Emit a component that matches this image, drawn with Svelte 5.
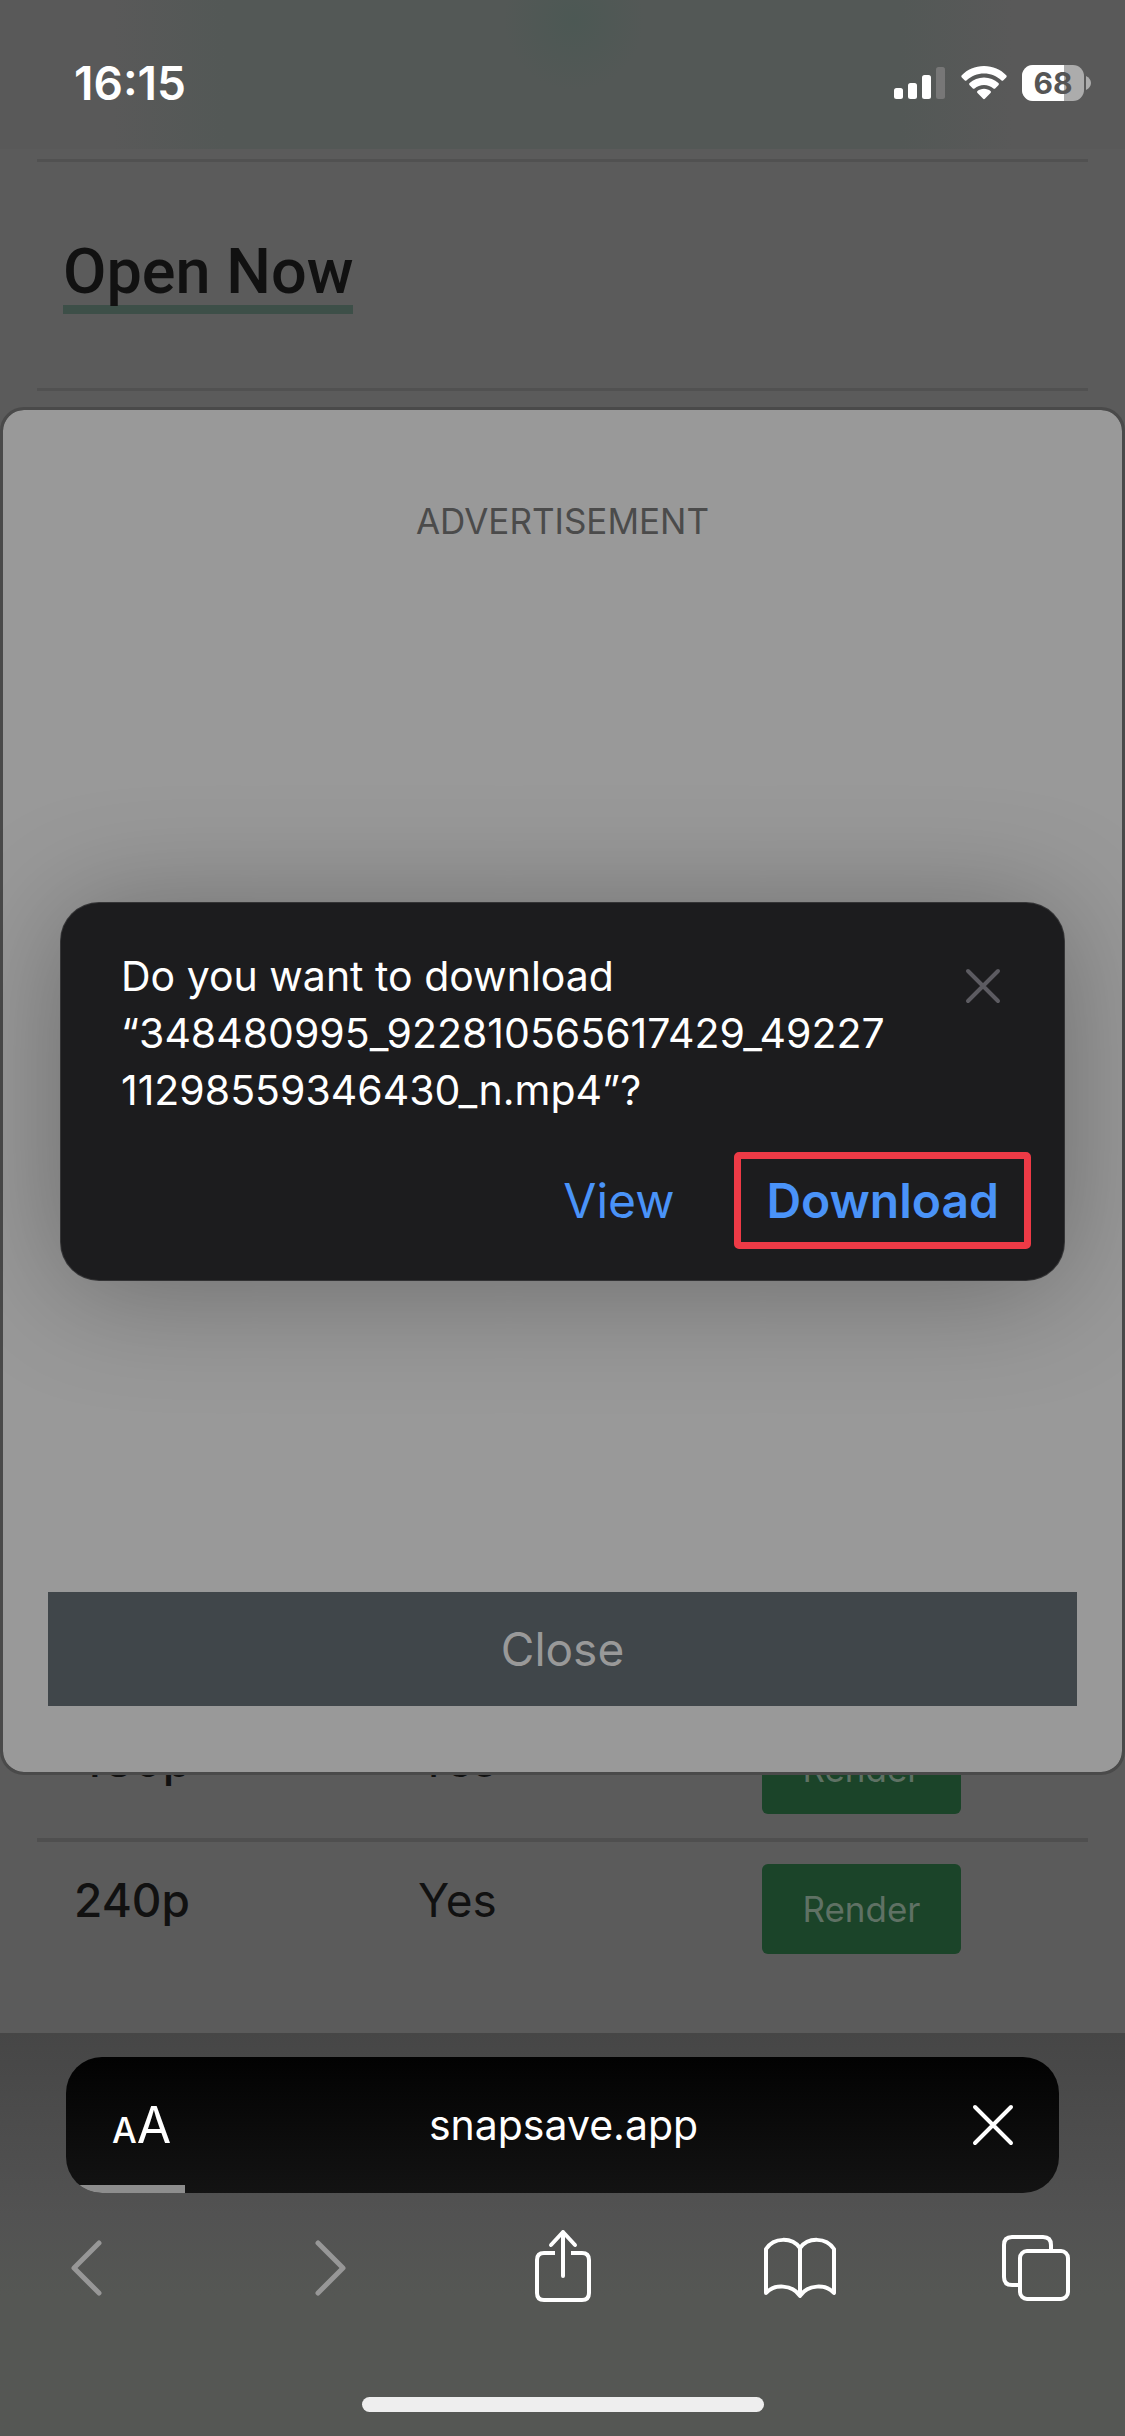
<script lang="ts">
  // Mobile browser screen: page content, ad modal and the download prompt on top.
  const fileName = '348480995_922810565617429_4922711298559346430_n.mp4';
  const rows = [
    { quality: '480p', render: 'Yes' },
    { quality: '240p', render: 'Yes' }
  ];
  const battery = 68;
  const progress = 12;
</script>

<div class="screen">
  <header class="status">
    <time>16:15</time>
    <div class="indicators">
      <svg width="52" height="34" viewBox="0 0 52 34" aria-hidden="true">
        <rect x="0" y="22" width="9" height="11" rx="2.5" fill="#fff" />
        <rect x="14" y="17" width="9" height="16" rx="2.5" fill="#fff" />
        <rect x="28" y="9" width="9" height="24" rx="2.5" fill="#fff" />
        <rect x="42" y="1" width="9" height="32" rx="2.5" fill="#777" />
      </svg>
      <svg width="46" height="34" viewBox="0 0 46 34" fill="#fff" aria-hidden="true">
        <path d="M23 0C14 0 6.500 3.500.8 9.200a1.600 1.600 0 0 0 0 2.200l2.800 2.800a1.500 1.500 0 0 0 2.100 0C10.300 9.800 16.300 7.400 23 7.400s12.700 2.400 17.300 6.800a1.500 1.500 0 0 0 2.100 0l2.800-2.800a1.600 1.600 0 0 0 0-2.200C39.500 3.500 32 0 23 0z" />
        <path d="M23 11.500c-5.600 0-10.600 2.100-14.400 5.600a1.500 1.500 0 0 0 0 2.200l3 3a1.500 1.500 0 0 0 2 .1c2.600-2.200 5.800-3.500 9.400-3.500s6.800 1.300 9.400 3.500a1.500 1.500 0 0 0 2-.1l3-3a1.500 1.500 0 0 0 0-2.200C33.600 13.600 28.600 11.500 23 11.500z" />
        <path d="M23 22.800c-2.600 0-4.800.9-6.500 2.300a1.300 1.300 0 0 0 0 2l5.400 5.500a1.500 1.500 0 0 0 2.200 0l5.400-5.500a1.300 1.300 0 0 0 0-2c-1.700-1.400-3.900-2.300-6.500-2.300z" />
      </svg>
      <div class="battery">
        <div class="cell">
          <div class="charge" style:width="{battery}%"></div>
          <span>{battery}</span>
        </div>
        <svg width="5" height="14" viewBox="0 0 5 14" aria-hidden="true"><path d="M0 0c3 1.500 5 4 5 7s-2 5.500-5 7z" fill="#acacac" /></svg>
      </div>
    </div>
  </header>

  <main>
    <h2><span>Open Now</span></h2>

    <table>
      <tbody>
        {#each rows as row}
          <tr>
            <th scope="row">{row.quality}</th>
            <td>{row.render}</td>
            <td><button class="render" type="button">Render</button></td>
          </tr>
        {/each}
      </tbody>
    </table>

    <div class="overlay">
      <section class="ad" aria-label="Advertisement">
        <p>ADVERTISEMENT</p>
        <button class="close" type="button">Close</button>
      </section>
    </div>

    <div class="overlay">
      <div class="prompt" role="dialog" aria-label="Download">
        <div class="message">
          <p>Do you want to download “{fileName}”?</p>
          <button type="button" aria-label="Dismiss">
            <svg width="36" height="36" viewBox="0 0 36 36" fill="none" stroke="#5c5b61" stroke-width="4" stroke-linecap="round">
              <path d="M3 3l30 30M33 3L3 33" />
            </svg>
          </button>
        </div>
        <div class="actions">
          <button type="button">View</button>
          <button class="primary" type="button">Download</button>
        </div>
      </div>
    </div>
  </main>

  <footer>
    <div class="address">
      <button class="reader" type="button" aria-label="Page settings"><small>A</small>A</button>
      <a href="#site">snapsave.app</a>
      <button class="stop" type="button" aria-label="Stop loading">
        <svg width="44" height="44" viewBox="0 0 44 44" fill="none" stroke="#fff" stroke-width="4" stroke-linecap="round">
          <path d="M4 4l36 36M40 4L4 40" />
        </svg>
      </button>
      <div class="progress" style:width="{progress}%"></div>
    </div>

    <nav aria-label="Browser">
      <button type="button" aria-label="Back">
        <svg width="76" height="76" viewBox="0 0 76 76" fill="none" stroke="#979797" stroke-width="5" stroke-linecap="round" stroke-linejoin="round">
          <path d="M49 15L24 40l25 25" />
        </svg>
      </button>
      <button type="button" aria-label="Forward">
        <svg width="76" height="76" viewBox="0 0 76 76" fill="none" stroke="#979797" stroke-width="5" stroke-linecap="round" stroke-linejoin="round">
          <path d="M31 15l25 25-25 25" />
        </svg>
      </button>
      <button type="button" aria-label="Share">
        <svg width="76" height="76" viewBox="0 0 76 76" fill="none" stroke="#fff" stroke-width="4" stroke-linecap="round" stroke-linejoin="round">
          <path d="M30 25H19q-7 0-7 7v33q0 7 7 7h38q7 0 7-7V32q0-7-7-7H46" stroke-linecap="butt" />
          <path d="M38 48V4M26 17L38 4l12 13" />
        </svg>
      </button>
      <button type="button" aria-label="Bookmarks">
        <svg width="76" height="76" viewBox="0 0 76 76" fill="none" stroke="#fff" stroke-width="4" stroke-linecap="round" stroke-linejoin="round">
          <path d="M38 20C30 9 12 9 4 21v44c8-9 26-9 34 3 8-12 26-12 34-3V21C64 9 46 9 38 20zV66" />
        </svg>
      </button>
      <button type="button" aria-label="Tabs">
        <svg width="76" height="76" viewBox="0 0 76 76" fill="none" stroke="#fff" stroke-width="4">
          <path d="M21 57h-8q-8 0-8-8V17q0-8 8-8h31q8 0 8 8v6" />
          <rect x="21" y="23" width="48" height="48" rx="7" />
        </svg>
      </button>
    </nav>

    <div class="home"></div>
  </footer>
</div>

<style>
  :global(body) { margin: 0; background: #5b5b5b; }
  .screen {
    min-height: 100vh;
    display: flex;
    flex-direction: column;
    font-family: Inter, "Liberation Sans", sans-serif;
    color: #111;
    background: #5b5b5b;
  }
  button { border: 0; margin: 0; padding: 0; background: none; color: inherit; font: inherit; cursor: pointer; }
  svg { display: block; }
  p, h2 { margin: 0; }

  .status {
    box-sizing: border-box;
    height: 149px;
    padding: 16px 34px 0 74px;
    display: flex;
    align-items: center;
    justify-content: space-between;
    color: #fff;
    background:
      radial-gradient(ellipse 70px 70px at 51% 20px, #4c5854, transparent),
      linear-gradient(90deg, #595959 10%, #535856 20%, #535856 80%, #595959 90%);
  }
  time { font-size: 46px; font-weight: 600; }
  .indicators { display: flex; align-items: center; gap: 15px; }
  .battery { display: flex; align-items: center; gap: 2px; }
  .cell {
    position: relative;
    width: 62px;
    height: 36px;
    border-radius: 11px;
    overflow: hidden;
    background: #acacac;
  }
  .charge { height: 100%; background: #fff; }
  .cell span {
    position: absolute;
    inset: 0;
    line-height: 36px;
    text-align: center;
    font-size: 30px;
    font-weight: 700;
    color: #555;
  }

  main {
    position: relative;
    flex: 1;
    padding: 10px 37px 55px;
    display: flex;
    flex-direction: column;
    justify-content: space-between;
  }
  h2 {
    padding: 71px 26px 74px;
    border: solid #515151;
    border-width: 3px 0;
    font: 500 63px/78px Roboto, sans-serif;
  }
  h2 span { display: inline-block; border-bottom: 9px solid #3d4f48; line-height: 66px; }
  table { width: 100%; border-collapse: collapse; table-layout: fixed; }
  tr + tr { border-top: 4px solid #4f4f4f; }
  th, td { width: 307px; padding: 22px 0 24px 37px; text-align: left; vertical-align: top; font-size: 46px; line-height: 72px; font-weight: 400; }
  th { font-weight: 500; }
  td:last-child { width: auto; }
  .render {
    display: block;
    width: 199px;
    border-radius: 6px;
    background: #1b4429;
    color: #5f7164;
    font-size: 35px;
    line-height: 90px;
  }

  .overlay { position: absolute; inset: 0; display: flex; align-items: center; }
  .ad {
    box-sizing: border-box;
    width: 100%;
    height: 1368px;
    padding: 84px 45px 66px;
    border: 3px solid #4a4a4a;
    border-radius: 24px;
    display: flex;
    flex-direction: column;
    justify-content: space-between;
    background: #999;
    background-clip: padding-box;
    text-align: center;
  }
  .ad p { font-size: 35px; line-height: 54px; color: #4b4b4b; }
  .close { background: #40464a; color: #999; font-size: 46px; line-height: 114px; }

  .prompt {
    box-sizing: border-box;
    width: 100%;
    margin: 0 61px;
    padding: 45px 33px 31px 60px;
    border-radius: 38px;
    background: #1c1c1e;
    color: #fff;
    box-shadow: 0 8px 120px rgba(0, 0, 0, 0.3), 0 0 0 1px #3c3c3e;
  }
  .message { display: flex; align-items: flex-start; justify-content: space-between; }
  .message p { max-width: 765px; font-size: 41px; line-height: 57px; overflow-wrap: anywhere; }
  .message button { padding: 20px 30px 0 0; }
  .actions { margin-top: 33px; display: flex; justify-content: flex-end; align-items: center; gap: 60px; font-size: 48px; line-height: 83px; color: #4a93f8; }
  .primary { padding: 0 25px; border: 7px solid #ee3a46; border-radius: 5px; font-weight: 600; }

  footer {
    box-sizing: border-box;
    height: 403px;
    padding: 24px 66px;
    display: flex;
    flex-direction: column;
    align-items: center;
    background: linear-gradient(#464646, #525252 45%, #555754 65%, #555754);
  }
  .address {
    position: relative;
    box-sizing: border-box;
    width: 100%;
    height: 136px;
    padding: 0 44px 0 46px;
    border-radius: 36px;
    overflow: hidden;
    display: grid;
    grid-template-columns: 1fr auto 1fr;
    align-items: center;
    background: linear-gradient(#020202, #131313);
    color: #fff;
  }
  .address a { color: inherit; text-decoration: none; font-size: 41px; }
  .reader { justify-self: start; font-size: 50px; }
  .reader small { font-size: 35px; font-weight: 500; }
  .stop { justify-self: end; }
  .progress { position: absolute; left: 0; bottom: 0; height: 8px; background: #8d8d8d; }
  nav { align-self: stretch; margin: 35px -16px 0; display: flex; justify-content: space-between; }
  .home { width: 402px; height: 15px; margin-top: auto; border-radius: 8px; background: #eee; }
</style>
